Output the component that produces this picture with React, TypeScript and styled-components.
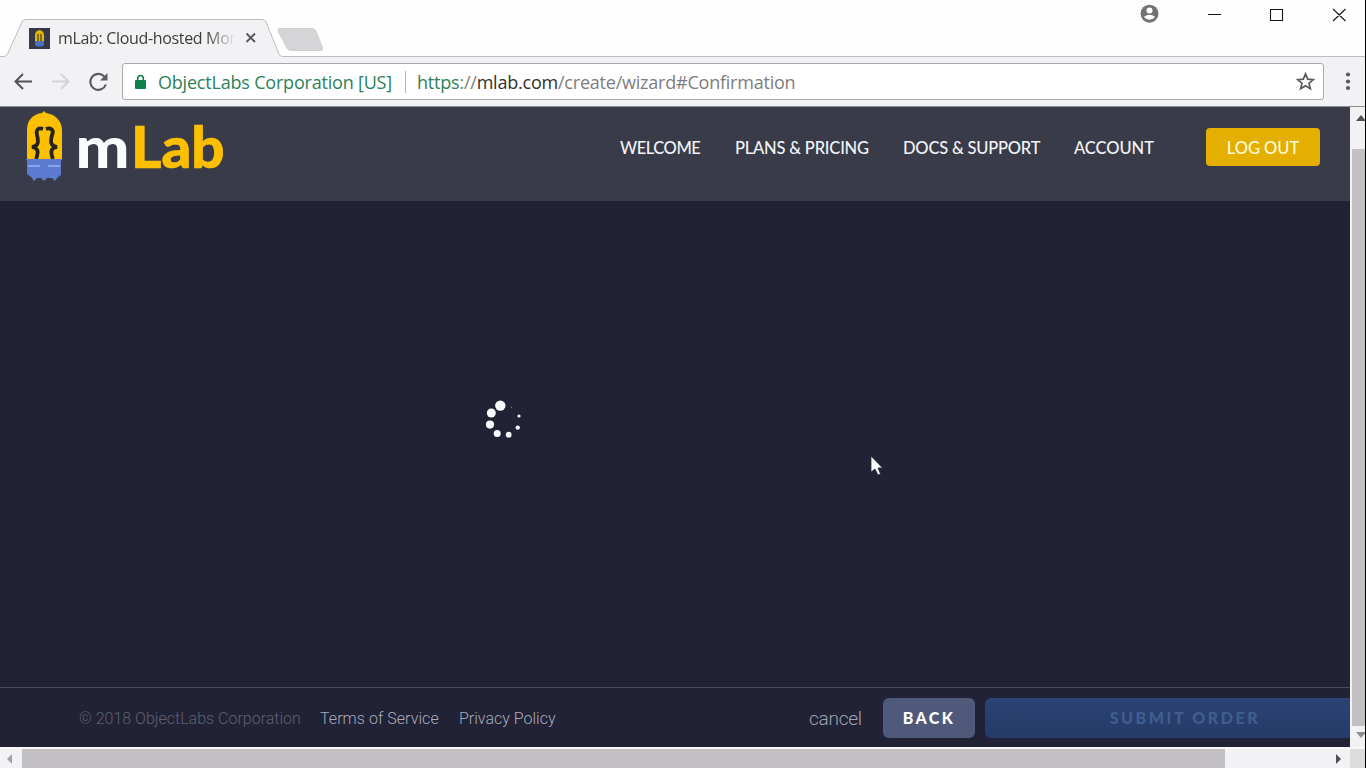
import React from 'react';
import styled, { createGlobalStyle } from 'styled-components';

const GlobalStyle = createGlobalStyle`
  * { box-sizing: border-box; }
  body { margin: 0; background: #fff; overflow: hidden; }
`;

const ui = `'Open Sans', 'Noto Sans', sans-serif`;

const Window = styled.div`
  width: 1366px;
  height: 768px;
  display: flex;
  flex-direction: column;
  overflow: hidden;
  background: #fefefe;
  border-right: 1px solid #000;
  font-family: ${ui};
`;

const TabStrip = styled.div`
  height: 57px;
  flex: none;
  display: flex;
  align-items: flex-end;
  justify-content: space-between;
  position: relative;
`;

const TabShapes = styled.svg`
  position: absolute;
  left: 0;
  top: 0;
`;

const Tab = styled.div`
  position: relative;
  height: 38px;
  padding-left: 29px;
  display: flex;
  align-items: center;
  align-self: flex-end;
`;

const TabTitle = styled.span`
  width: 177px;
  margin-left: 8px;
  white-space: nowrap;
  font-size: 16px;
  line-height: 24px;
  letter-spacing: -0.33px;
  color: #3c3c3c;
  mask-image: linear-gradient(to right, #000 148px, transparent 178px);
`;

const CloseTab = styled.svg`
  margin-left: 10px;
`;

const WindowControls = styled.div`
  position: relative;
  align-self: flex-start;
  display: flex;
  align-items: center;
  padding: 3px 18px 0 0;
`;

const Toolbar = styled.div`
  height: 49px;
  flex: none;
  display: flex;
  align-items: center;
  background: #f2f1f3;
  padding: 0 10px 0 13px;
`;

const ToolIcon = styled.svg<{ $gap?: number }>`
  flex: none;
  margin-right: ${p => p.$gap ?? 0}px;
`;

const AddressBar = styled.div`
  width: 1202px;
  height: 37px;
  flex: none;
  display: flex;
  align-items: center;
  padding: 0 8px 0 12px;
  border: 1px solid #a9a8ac;
  border-radius: 3px;
  background: #fff;
  font-size: 18px;
  line-height: 28px;
  white-space: nowrap;
`;

const Company = styled.span`
  margin-left: 12px;
  width: 248px;
  height: 22px;
  line-height: 22px;
  border-right: 1px solid #b5b5b5;
  color: #2c8259;
  letter-spacing: -0.2px;
`;

const Url = styled.span`
  flex: 1;
  margin-left: 11px;
  color: #7d7d7d;
  letter-spacing: -0.22px;
`;

const UrlPart = styled.span<{ $color: string }>`
  color: ${p => p.$color};
`;

const Viewport = styled.div`
  flex: 1;
  display: flex;
  min-height: 0;
  border-top: 1px solid #8b8b92;
`;

const Page = styled.div`
  width: 1350px;
  flex: none;
  display: flex;
  flex-direction: column;
  background: #212236;
`;

const Header = styled.header`
  height: 94px;
  flex: none;
  display: flex;
  align-items: flex-start;
  justify-content: space-between;
  padding: 0 30px 0 20px;
  background: #393c48;
`;

const Nav = styled.nav`
  display: flex;
  align-items: flex-start;
  padding-top: 21px;
  font-family: Lato, sans-serif;
`;

const NavLink = styled.a<{ $width: number; $spacing?: number }>`
  width: ${p => p.$width}px;
  padding-top: 1px;
  font-size: 16.5px;
  font-weight: 500;
  line-height: 38px;
  white-space: nowrap;
  letter-spacing: ${p => p.$spacing ?? 0}px;
  color: #f2f3f7;
`;

const LogOut = styled.button`
  width: 114px;
  height: 38px;
  padding: 2px 0 0;
  border: 0;
  border-radius: 4px;
  background: #e4af00;
  color: #fffbd8;
  font: 500 16.5px/36px Lato, sans-serif;
`;

const Main = styled.main`
  flex: 1;
  display: flex;
  padding: 195px 0 0 480px;
`;

const Footer = styled.footer`
  height: 60px;
  flex: none;
  display: flex;
  align-items: center;
  padding-left: 79px;
  border-top: 1px solid #494b5b;
  overflow: hidden;
  font-family: Roboto, sans-serif;
`;

const FooterText = styled.span<{ $width: number; $color: string; $size?: number; $spacing?: number }>`
  flex: none;
  width: ${p => p.$width}px;
  padding-top: 2px;
  font-size: ${p => p.$size ?? 16}px;
  font-weight: 300;
  white-space: nowrap;
  color: ${p => p.$color};
  letter-spacing: ${p => p.$spacing ?? 0}px;
`;

const ActionButton = styled.button<{ $primary?: boolean }>`
  flex: none;
  width: ${p => (p.$primary ? 400 : 92)}px;
  height: 40px;
  margin-right: 10px;
  padding: 0;
  border: 0;
  border-radius: ${p => (p.$primary ? '6px 0 0 6px' : '6px')};
  background: ${p => (p.$primary ? 'linear-gradient(#2b4373, #253b69)' : '#4f5a7b')};
  color: ${p => (p.$primary ? '#415d8e' : '#fff')};
  font: 900 16px/40px Lato, sans-serif;
  letter-spacing: ${p => (p.$primary ? 2.6 : 2.4)}px;
`;

const VScroll = styled.div`
  flex: 1;
  display: flex;
  flex-direction: column;
  align-items: flex-end;
  padding-top: 8px;
  background: #f2f1f3;
`;

const VThumb = styled.div`
  width: 13px;
  height: 577px;
  margin: 28px 0 6px;
  background: #c2c0c3;
`;

const HScroll = styled.div`
  height: 21px;
  flex: none;
  display: flex;
  align-items: center;
  border-top: 2px solid #f8f7fb;
  background: #f2f1f3;
`;

const HThumb = styled.div`
  width: 1203px;
  height: 19px;
  background: #c2c0c3;
`;

const Corner = styled.div`
  width: 15px;
  height: 19px;
  margin-left: auto;
  background: #dcdcdd;
`;

const Pointer = styled.svg`
  position: absolute;
  left: 870px;
  top: 455px;
`;

const Logo = () => (
  <svg width="210" height="80" viewBox="20 107 210 80">
    <path d="M27 160V130C27 120 33 114 42 113L44 111L46 113C55 114 62 121 62 130V160Z" fill="#fdbf02" />
    <path d="M43 129C37 127 36 131 37 135C39 143 38 146 32 147C38 148 39 151 36 159M46 129C52 127 54 131 52 135C50 143 51 146 57 147C51 148 50 151 53 159" fill="none" stroke="#25241f" strokeWidth="3.8" />
    <path d="M26 159H62.500L61 161V175L57 178L55 181L52 178H47L44 181L41 178H37L34 181L31 177L27 174V161Z" fill="#5b7ad0" />
    <path d="M28 166H40M48 166H60" stroke="#87a5ed" strokeWidth="2" />
    <text x="75.500" y="167.500" fontFamily="Lato" fontWeight="900" fontSize="58" textLength="54" lengthAdjust="spacingAndGlyphs" fill="#fbfcff">m</text>
    <text x="131" y="167.500" fontFamily="Lato" fontWeight="900" fontSize="56.500" textLength="93.500" lengthAdjust="spacingAndGlyphs" fill="#fdbf02" stroke="#fdbf02" strokeWidth="0.700">Lab</text>
  </svg>
);

const dots = [
  [500.3, 405.6, 5.2], [491.3, 413, 4.5], [490, 424.6, 4.1], [497.2, 433.6, 3.5],
  [508.7, 434.7, 2.9], [517.7, 427.6, 2.2], [519, 416, 1.6], [511.5, 407.3, 0.7],
];

const Spinner = () => (
  <svg width="45" height="45" viewBox="480 396 45 45">
    {dots.map(([x, y, r]) => <circle key={x} cx={x} cy={y} r={r} fill="#fafaff" opacity={r < 1 ? 0.4 : 1} />)}
  </svg>
);

export default function App() {
  return (
    <Window>
      <GlobalStyle />
      <TabStrip>
        <TabShapes width="1365" height="57">
          <path d="M0 56.5H4Q7 56.5 8 53L22 22Q23 19.5 26 19.5H262Q265 19.5 266 22L279 54Q280 56.5 283 56.5H1365V58H0Z" fill="#f2f1f3" stroke="#bdbcbe" />
          <path d="M280 28.5H312Q315 28.5 316 31L322.500 48Q323 50.5 321 50.5H291Q288 50.5 287 48L278 31Q277 28.5 280 28.5Z" fill="#d5d4d6" stroke="#d1d0d3" />
        </TabShapes>
        <Tab>
          <svg width="21" height="21">
            <rect width="21" height="21" fill="#353947" />
            <path d="M6 14V7Q6 3 10.5 2Q15 3 15 7V14Z" fill="#e2b70d" />
            <path d="M9 14V6M12 14V6" stroke="#55460e" strokeWidth="1.3" />
            <path d="M6 13H15V17L13 18.5H8L6 17Z" fill="#4e70bd" />
          </svg>
          <TabTitle>mLab: Cloud-hosted Mon</TabTitle>
          <CloseTab width="12" height="12"><path d="M1.5 1.5L10 10M10 1.5L1.5 10" stroke="#57565a" strokeWidth="1.8" /></CloseTab>
        </Tab>
        <WindowControls>
          <svg width="210" height="24" viewBox="1137 3 210 24">
            <circle cx="1149.5" cy="13.7" r="9" fill="#727174" />
            <circle cx="1149.5" cy="10.5" r="3" fill="#fff" />
            <path d="M1143.8 17Q1149.5 12.7 1155.2 17Q1149.5 22.5 1143.8 17Z" fill="#fff" />
            <path d="M1208 14.5H1221M1270.5 9.5H1282.5V20.5H1270.5ZM1333 9L1345.500 21M1345.500 9L1333 21" fill="none" stroke="#151515" strokeWidth="1.1" />
          </svg>
        </WindowControls>
      </TabStrip>
      <Toolbar>
        <ToolIcon $gap={17} width="20" height="20" viewBox="0 0 20 20"><path d="M19 9.500H3M10 2L2.500 9.500L10 17" fill="none" stroke="#545357" strokeWidth="2" /></ToolIcon>
        <ToolIcon $gap={17} width="20" height="20" viewBox="0 0 20 20"><path d="M2 9.500H18M11 2L18.500 9.500L11 17" fill="none" stroke="#d5d4d7" strokeWidth="2" /></ToolIcon>
        <ToolIcon $gap={13} width="22" height="22" viewBox="0 0 22 22">
          <path d="M18.900 13.500A8 8 0 1 1 17.300 5.500" fill="none" stroke="#5c5b5f" strokeWidth="2.1" />
          <path d="M20.500 2V9.500H13Z" fill="#5c5b5f" />
        </ToolIcon>
        <AddressBar>
          <ToolIcon width="11" height="16" viewBox="0 0 11 16">
            <path d="M2.700 7V4.300A2.800 2.800 0 0 1 8.300 4.300V7" fill="none" stroke="#0b804a" strokeWidth="1.6" />
            <rect y="6" width="11" height="9" rx="1" fill="#0b804a" />
          </ToolIcon>
          <Company>ObjectLabs Corporation [US]</Company>
          <Url><UrlPart $color="#2c8259">https</UrlPart>://<UrlPart $color="#303030">mlab.com</UrlPart>/create/wizard#Confirmation</Url>
          <ToolIcon width="19" height="19" viewBox="0 0 20 20">
            <path d="M10 2L12.300 7.500L18.200 8L13.700 11.900L15.100 17.700L10 14.600L4.900 17.700L6.300 11.900L1.800 8L7.700 7.500Z" fill="none" stroke="#5a595d" strokeWidth="1.800" />
          </ToolIcon>
        </AddressBar>
        <ToolIcon width="30" height="20" viewBox="1324 72 30 20">
          {[74.5, 81.5, 88].map(y => <circle key={y} cx="1348" cy={y} r="2.100" fill="#5a595d" />)}
        </ToolIcon>
      </Toolbar>
      <Viewport>
        <Page>
          <Header>
            <Logo />
            <Nav>
              <NavLink $width={115} $spacing={-0.45}>WELCOME</NavLink>
              <NavLink $width={168} $spacing={-0.2}>PLANS &amp; PRICING</NavLink>
              <NavLink $width={171} $spacing={-0.2}>DOCS &amp; SUPPORT</NavLink>
              <NavLink $width={132} $spacing={-0.05}>ACCOUNT</NavLink>
              <LogOut>LOG OUT</LogOut>
            </Nav>
          </Header>
          <Main><Spinner /></Main>
          <Footer>
            <FooterText $width={241} $color="#5f6071">© 2018 ObjectLabs Corporation</FooterText>
            <FooterText $width={139} $color="#a9abb9" $spacing={0.05}>Terms of Service</FooterText>
            <FooterText $width={350} $color="#a9abb9">Privacy Policy</FooterText>
            <FooterText $width={74} $color="#a1a3b1" $size={19} $spacing={-0.25}>cancel</FooterText>
            <ActionButton>BACK</ActionButton>
            <ActionButton $primary>SUBMIT ORDER</ActionButton>
          </Footer>
        </Page>
        <VScroll>
          <svg width="9" height="6"><path d="M0 6L5 0L10 6Z" fill="#504f53" /></svg>
          <VThumb />
          <svg width="9" height="6"><path d="M0 0H10L5 6Z" fill="#8f8e92" /></svg>
        </VScroll>
      </Viewport>
      <HScroll>
        <ToolIcon width="22" height="12"><path d="M12 1V11L7 6Z" fill="#a3a2a6" /></ToolIcon>
        <HThumb />
        <ToolIcon width="120" height="12"><path d="M111 1V11L116 6Z" fill="#504f53" /></ToolIcon>
        <Corner />
      </HScroll>
      <Pointer width="14" height="22"><path d="M1 1V17L5 14L8 20L10.500 19L8 13H12.500Z" fill="#fff" stroke="#292a3c" strokeWidth="0.800" /></Pointer>
    </Window>
  );
}
